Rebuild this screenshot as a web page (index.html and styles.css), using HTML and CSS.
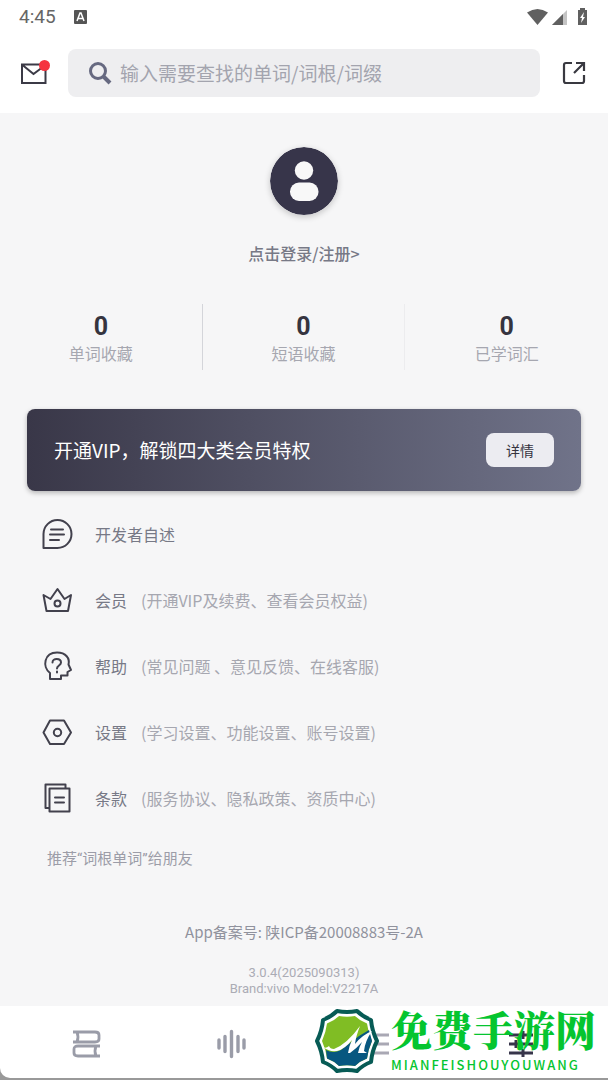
FILE: index.html
```html
<!DOCTYPE html>
<html lang="zh-CN">
<head>
<meta charset="utf-8">
<meta name="viewport" content="width=device-width, initial-scale=1">
<title>词根单词</title>
<link rel="stylesheet" href="styles.css">
</head>
<body>
<div class="screen">
  <div class="status">
    <span class="clock">4:45</span>
    <svg class="input-mode" width="13" height="14" viewBox="0 0 13 14"><rect width="13" height="14" rx="1" fill="#555"/><path d="M3 11 6 3h1l3 8M4.500 8.500h4" fill="none" stroke="#fff" stroke-width="1.500"/></svg>
    <svg class="signals" width="62" height="20" viewBox="0 0 62 20"><path d="M0 5.500Q10.500-1.500 21 5.500L10.500 18Z" fill="#606060"/><path d="M25 18 40 3v15Z" fill="#c4c4c4"/><path d="M25 18 36 7v11Z" fill="#606060"/><path d="M51 3h2V1h5v2h2v15h-9Z" fill="#606060"/><path d="m57 5-4 6h2l-1 5 4-6h-2Z" fill="#fff"/></svg>
  </div>
  <header class="header">
    <button class="icon-button" aria-label="消息">
      <svg width="30" height="28" viewBox="0 0 30 28"><path d="M2 5.500h23.500v18.500H2Z M2.500 6l11 9 12-9" fill="none" stroke="#3b3a46" stroke-width="2"/><circle cx="24.500" cy="6.500" r="5.500" fill="#f5333f"/></svg>
    </button>
    <label class="search">
      <svg width="24" height="24" viewBox="0 0 24 24" fill="none" stroke="#666980"><circle cx="10" cy="10" r="7.500" stroke-width="3"/><path d="m15.500 15.500 6.500 6.500" stroke-width="4"/></svg>
      <input type="text" placeholder="输入需要查找的单词/词根/词缀" aria-label="搜索">
    </label>
    <button class="icon-button" aria-label="分享">
      <svg width="24" height="24" viewBox="0 0 24 24" fill="none" stroke="#393940" stroke-width="2.200"><path d="M10 2H4Q2 2 2 4v16q0 2 2 2h16q2 0 2-2v-6M12 12 21 3M14 2h8v8"/></svg>
    </button>
  </header>
  <main class="content">
    <section class="profile">
      <svg class="avatar" width="68" height="68" viewBox="0 0 68 68"><circle cx="34" cy="34" r="34" fill="#37354a"/><circle cx="34" cy="23.500" r="9.200" fill="#f8f8f8"/><rect x="20" y="35.500" width="28.500" height="18.500" rx="9" fill="#f8f8f8"/></svg>
      <a class="login" href="#login">点击登录/注册&gt;</a>
    </section>
    <section class="stats">
      <div class="stat"><strong>0</strong><span>单词收藏</span></div>
      <div class="stat"><strong>0</strong><span>短语收藏</span></div>
      <div class="stat"><strong>0</strong><span>已学词汇</span></div>
    </section>
    <section class="vip"><span>开通VIP，解锁四大类会员特权</span><button class="detail">详情</button></section>
    <nav class="menu">
      <a class="row" href="#about"><svg class="row-icon" viewBox="0 0 32 32"><path d="M2.500 30V16A14 14 0 1 1 16.500 30Z"/><path d="M10 11.500h12M9 16.500h14M9 22h9"/></svg><span class="name">开发者自述</span></a>
      <a class="row" href="#member"><svg class="row-icon" viewBox="0 0 32 32"><path d="m2.500 11 7 4L16.500 5l7 10 6.500-4-3 16H5.500Z"/><circle cx="16.500" cy="19.500" r="3"/></svg><span class="name">会员</span><span class="note">(开通VIP及续费、查看会员权益)</span></a>
      <a class="row" href="#help"><svg class="row-icon" viewBox="0 0 32 32"><path d="M9 29v-6C1 17 3 2.500 16 2.500c9 0 13 6 11.500 12L30 20l-3.500 2v3.500H20V29Z"/><path d="M11.500 12.500c0-5 8.500-4.500 8.500 0 0 3-4 3-4 6M16 21.500v1"/></svg><span class="name">帮助</span><span class="note">(常见问题 、意见反馈、在线客服)</span></a>
      <a class="row" href="#settings"><svg class="row-icon" viewBox="0 0 32 32"><path d="M9 4.500h14L30 16.500 23 28H9L2.500 16.500Z"/><circle cx="16.500" cy="16.500" r="3.700"/></svg><span class="name">设置</span><span class="note">(学习设置、功能设置、账号设置)</span></a>
      <a class="row" href="#terms"><svg class="row-icon" viewBox="0 0 32 32"><path d="M8 26H4.500V2.500h20V6M8.500 6.500h20v23h-20Z M14 15.500h9M14 20.500h9"/></svg><span class="name">条款</span><span class="note">(服务协议、隐私政策、资质中心)</span></a>
    </nav>
    <a class="recommend" href="#recommend">推荐“词根单词”给朋友</a>
    <footer class="footer">
      <p class="record">App备案号: 陕ICP备20008883号-2A</p>
      <p class="version">3.0.4(2025090313)<br>Brand:vivo Model:V2217A</p>
    </footer>
  </main>
  <div class="dock">
    <nav class="tabs">
      <button class="tab" aria-label="词书"><svg width="30" height="30" viewBox="0 0 30 30" fill="none" stroke="#9a9ca8" stroke-width="2.800"><path d="M1 3h22q4 0 4 3v4q0 3-4 3H1M5 3q2 5 0 10M28 17H6q-4 0-4 3v4q0 3 4 3h22M24 17q-2 5 0 10"/></svg></button>
      <button class="tab" aria-label="听力"><svg width="30" height="30" viewBox="0 0 30 30" fill="none" stroke="#9a9ca8" stroke-width="3.400" stroke-linecap="round"><path d="M2 11v8M8 7.500v15M14.500 2.500v25M21 7.500v15M27 11v8"/></svg></button>
      <button class="tab" aria-label="列表"><svg width="30" height="30" viewBox="0 0 30 30" fill="none" stroke="#a9a8b4" stroke-width="3"><path d="M2 6h25M2 15h25M2 24h25"/></svg></button>
      <button class="tab" aria-label="我的"><svg width="30" height="30" viewBox="0 0 30 30" fill="none" stroke="#37354a" stroke-width="3"><path d="M2 6h24M2 15h24M2 24h24M16 2v8M9 11v8M16 20v8"/></svg></button>
    </nav>
    <div class="brand">
      <svg width="66" height="66" viewBox="-1 -1 66 66" stroke-linejoin="round">
        <path d="M22 2Q32 4 42 2 48 8 56 11 57 22 62 32 57 42 56 53 48 56 42 62 32 60 22 62 16 56 8 53 7 42 2 32 7 22 8 11 16 8 22 2Z" fill="#fff" stroke="#075b55" stroke-width="4"/>
        <path d="M24 7Q32 8.500 40 7 45 12 52 14.500 53 23 57 32 53 41 52 49.500 45 52 40 57 32 55.500 24 57 19 52 12 49.500 11 41 7 32 11 23 12 14.500 19 12 24 7Z" fill="#80bd24"/>
        <path d="M11 41q7 4 15 0l18-14 10-6 3 11q-4 9-5 17.500Q45 52 40 57q-8-1.500-16 0-5-5-12-7.500Z" fill="#075780"/>
        <path d="M8 38q3 2 6-1 1 3 5 3 13-5 26-23-4 10-5 18 7-9 17-13-7 10-8 20l3 2h-9q1-6 4-11-6 7-12 11h-2q1-7 4-13-7 9-15 11-8 1-14-4Z" fill="#fff"/>
      </svg>
      <div class="brand-text"><span class="brand-name">免费手游网</span><span class="brand-latin">MIANFEISHOUYOUWANG</span></div>
    </div>
  </div>
</div>
</body>
</html>
```

FILE: styles.css
```css
* { box-sizing: border-box; }
body {
  margin: 0;
  background: #fff;
  color: #777986;
  font-family: "Noto Sans CJK SC", sans-serif;
  font-size: 16px;
  line-height: 24px;
}
button { border: 0; padding: 0; background: none; font: inherit; color: inherit; }
a { color: inherit; text-decoration: none; }
svg { display: block; flex: none; }
p { margin: 0; }
.screen { display: flex; flex-direction: column; min-height: 100vh; }
.status { display: flex; align-items: center; height: 33px; padding: 0 19px; }
.clock { font-family: Roboto, sans-serif; font-size: 19px; color: #666; }
.input-mode { margin-left: 18px; }
.signals { margin-left: auto; }
.header { display: flex; align-items: center; gap: 18px; padding: 16px 20px; }
.icon-button { display: flex; flex: none; }
.header .icon-button:last-child { margin: 0 2px 0 4px; }
.search {
  display: flex;
  flex: 1;
  align-items: center;
  gap: 8px;
  height: 48px;
  padding: 0 20px;
  border-radius: 8px;
  background: #eeeef0;
}
.search input {
  flex: 1;
  min-width: 0;
  border: 0;
  padding: 0;
  outline: 0;
  background: none;
  font: inherit;
  font-size: 19px;
}
.search input::placeholder { color: #a3a4ae; opacity: 1; }
.content { flex: 1; padding: 34px 27px 7px; background: #f6f6f7; }
.profile { display: flex; flex-direction: column; align-items: center; gap: 26px; }
.avatar { border-radius: 50%; box-shadow: 0 2px 6px #0003; }
.login { font-weight: 500; }
.stats { display: grid; grid-template-columns: repeat(3, 1fr); margin: 39px -27px; }
.stat { display: flex; flex-direction: column; align-items: center; height: 66px; padding-top: 9px; }
.stat:nth-child(1) { border-right: 1px solid #d4d5da; }
.stat:nth-child(2) { border-right: 1px solid #ececee; }
.stat strong { font: 700 25px/28px Roboto, sans-serif; color: #35343f; }
.stat span { color: #a6a7b0; }
.vip {
  display: flex;
  align-items: center;
  justify-content: space-between;
  height: 82px;
  padding: 0 27px;
  border-radius: 8px;
  background: linear-gradient(90deg, #393748, #707389);
  box-shadow: 0 2px 5px #0004;
  color: #fff;
  font-size: 19px;
}
.detail { width: 68px; height: 34px; border-radius: 8px; background: #ececf1; color: #35343f; font-size: 14px; }
.menu { padding: 10px 14px 0; }
.row { display: flex; align-items: center; height: 66px; }
.row-icon { width: 32px; height: 32px; margin-right: 22px; fill: none; stroke: #42414d; stroke-width: 2; stroke-linejoin: round; stroke-linecap: round; }
.name { margin-right: 14px; }
.note { color: #a6a7b0; }
.recommend { display: block; padding: 16px 20px 0; color: #9c9da8; font-family: Roboto, "Noto Sans CJK SC", sans-serif; font-size: 15px; }
.footer { padding-top: 49px; text-align: center; }
.record { color: #90929d; font-size: 15px; }
.version { margin-top: 21px; color: #abacb5; font: 13px/16px Roboto, sans-serif; }
.dock { position: relative; padding-bottom: 2px; background: #999; }
.tabs { display: grid; grid-template-columns: repeat(4, 1fr); height: 72px; padding: 0 14px; border-bottom-left-radius: 10px; background: #fff; }
.tab { display: flex; align-items: center; justify-content: center; padding-top: 4px; }
.brand { position: absolute; right: 12px; bottom: 5px; display: flex; align-items: center; gap: 11px; }
.brand-text { display: flex; flex-direction: column; color: #05c52f; }
.brand-name { font-family: "Noto Serif CJK SC", "Noto Sans CJK SC", serif; font-size: 41px; font-weight: 900; line-height: 44px; }
.brand-latin { margin-top: 4px; font: 500 13px/20px "Noto Sans CJK SC", sans-serif; letter-spacing: 2px; }
```
